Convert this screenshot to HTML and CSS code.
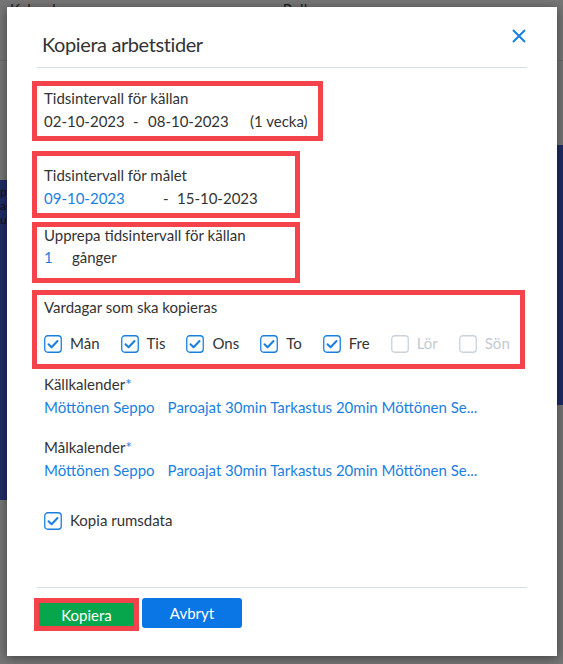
FILE: index.html
```html
<!DOCTYPE html>
<html lang="sv">
<head>
  <meta charset="UTF-8">
  <title>Kopiera arbetstider</title>
  <link rel="stylesheet" href="styles.css">
</head>
<body>

  <!-- Page behind the dialog (dimmed) -->
  <div class="page">
    <div class="page-head">
      <span class="tab">Kalendrar</span>
      <span class="tab tab-roles">Roller</span>
    </div>
    <div class="page-body">
      <div class="strip strip-left"><p>pe</p><p>as</p><p>ur</p></div>
      <div class="strip strip-right"></div>
    </div>
  </div>

  <!-- Copy working hours dialog -->
  <div class="modal">
    <div class="modal-header">
      <h2>Kopiera arbetstider</h2>
      <button class="close" type="button">
        <svg width="14" height="14" viewBox="0 0 14 14"><path d="M1 1L13 13M13 1L1 13"/></svg>
      </button>
    </div>

    <div class="modal-body">
      <div class="group g-source">
        <div class="label">Tidsintervall för källan</div>
        <div class="row">
          <span class="cell w-89">02-10-2023</span><span class="cell w-15">-</span><span class="cell w-102">08-10-2023</span><span>(1 vecka)</span>
        </div>
      </div>

      <div class="group g-target">
        <div class="label">Tidsintervall för målet</div>
        <div class="row">
          <span class="cell w-119 link">09-10-2023</span><span class="cell w-14">-</span><span>15-10-2023</span>
        </div>
      </div>

      <div class="group g-repeat">
        <div class="label">Upprepa tidsintervall för källan</div>
        <div class="row">
          <span class="cell w-28 link">1</span><span>gånger</span>
        </div>
      </div>

      <div class="group g-days">
        <div class="label">Vardagar som ska kopieras</div>
        <div class="days">
          <label class="check"><svg class="box on" viewBox="0 0 18 18"><rect x="0.75" y="0.75" width="16.5" height="16.5" rx="3"/><path d="M4.5 9.3L7.6 12.3L13.5 6"/></svg>Mån</label>
          <label class="check"><svg class="box on" viewBox="0 0 18 18"><rect x="0.75" y="0.75" width="16.5" height="16.5" rx="3"/><path d="M4.5 9.3L7.6 12.3L13.5 6"/></svg>Tis</label>
          <label class="check"><svg class="box on" viewBox="0 0 18 18"><rect x="0.75" y="0.75" width="16.5" height="16.5" rx="3"/><path d="M4.5 9.3L7.6 12.3L13.5 6"/></svg>Ons</label>
          <label class="check"><svg class="box on" viewBox="0 0 18 18"><rect x="0.75" y="0.75" width="16.5" height="16.5" rx="3"/><path d="M4.5 9.3L7.6 12.3L13.5 6"/></svg>To</label>
          <label class="check"><svg class="box on" viewBox="0 0 18 18"><rect x="0.75" y="0.75" width="16.5" height="16.5" rx="3"/><path d="M4.5 9.3L7.6 12.3L13.5 6"/></svg>Fre</label>
          <label class="check off"><svg class="box" viewBox="0 0 18 18"><rect x="0.75" y="0.75" width="16.5" height="16.5" rx="3"/></svg>Lör</label>
          <label class="check off"><svg class="box" viewBox="0 0 18 18"><rect x="0.75" y="0.75" width="16.5" height="16.5" rx="3"/></svg>Sön</label>
        </div>
      </div>

      <div class="field f-source">
        <div class="label">Källkalender<span class="req">*</span></div>
        <div class="row link"><span class="person">Möttönen Seppo</span><span>Paroajat 30min Tarkastus 20min Möttönen Se...</span></div>
      </div>

      <div class="field f-target">
        <div class="label">Målkalender<span class="req">*</span></div>
        <div class="row link"><span class="person">Möttönen Seppo</span><span>Paroajat 30min Tarkastus 20min Möttönen Se...</span></div>
      </div>

      <label class="check rooms"><svg class="box on" viewBox="0 0 18 18"><rect x="0.75" y="0.75" width="16.5" height="16.5" rx="3"/><path d="M4.5 9.3L7.6 12.3L13.5 6"/></svg>Kopia rumsdata</label>
    </div>

    <div class="modal-footer">
      <button type="button" class="btn btn-copy">Kopiera</button>
      <button type="button" class="btn btn-cancel">Avbryt</button>
    </div>
  </div>

</body>
</html>
```

FILE: styles.css
```css
body {
  margin: 0;
  height: 664px;
  overflow: hidden;
  position: relative;
  font-family: Lato, "Noto Sans", sans-serif;
  font-size: 15px;
  background-color: #767676;
}

/* dimmed page behind the dialog */
.page-head {
  height: 60px;
  border-bottom: 1px solid #6a6a6a;
  padding-left: 10px;
}

.tab {
  display: inline-block;
  margin-top: -12px;
  line-height: 20px;
  color: #1c1c1c;
}

.tab-roles {
  margin-left: 205px;
}

.page-body {
  display: flex;
  justify-content: space-between;
}

.strip {
  background-color: #1f2c66;
}

.strip-left {
  width: 7px;
  height: 320px;
  margin-top: 119px;
  overflow: hidden;
}

.strip-left p {
  margin: 0;
  font-size: 12px;
  line-height: 14px;
  color: #111;
}

.strip-left p:first-child {
  margin-top: 5px;
}

.strip-right {
  width: 20px;
  height: 260px;
  margin-top: 84px;
}

/* dialog */
.modal {
  position: absolute;
  left: 7px;
  top: 7px;
  width: 550px;
  height: 649px;
  box-sizing: border-box;
  padding: 0 30px;
  display: flex;
  flex-direction: column;
  background-color: #fff;
  box-shadow: 0 2px 10px rgba(0, 0, 0, 0.45);
  color: #333;
}

.modal-header {
  display: flex;
  justify-content: space-between;
  align-items: flex-start;
  padding: 22px 1px 8px 5px;
  border-bottom: 1px solid #d5dde6;
}

.modal-header h2 {
  margin: 0;
  font-size: 20px;
  font-weight: 400;
  letter-spacing: -0.4px;
  line-height: 30px;
  color: #333;
}

.close {
  padding: 0;
  border: none;
  background: none;
  width: 14px;
  height: 14px;
  cursor: pointer;
}

.close svg {
  display: block;
  fill: none;
  stroke: #1a7fe0;
  stroke-width: 2;
}

.modal-body {
  flex: 1;
}

.label,
.row {
  line-height: 23px;
  white-space: nowrap;
}

.link,
.req {
  color: #1a7fe0;
}

.cell {
  display: inline-block;
}

.w-14 { width: 14px; }
.w-15 { width: 15px; }
.w-28 { width: 28px; }
.w-89 { width: 89px; }
.w-102 { width: 102px; }
.w-119 { width: 119px; }

/* highlighted groups */
.group {
  box-sizing: border-box;
  padding-left: 7px;
  outline: 5px solid #f4434a;
}

.g-source {
  width: 281px;
  height: 50px;
  margin-top: 18px;
  padding-top: 1px;
}

.g-target {
  width: 258px;
  height: 57px;
  margin-top: 20px;
  padding-top: 8px;
}

.g-repeat {
  width: 258px;
  height: 51px;
  margin-top: 14px;
}

.g-repeat .label {
  line-height: 16px;
}

.g-repeat .row {
  margin-top: 3px;
}

.g-days {
  width: 483px;
  height: 69px;
  margin-top: 17px;
  padding-top: 1px;
}

.days {
  display: flex;
  gap: 21px;
  margin-top: 13px;
}

.check {
  display: flex;
  align-items: center;
  gap: 8px;
  line-height: 23px;
  color: #333;
}

.box {
  width: 18px;
  height: 18px;
  flex: none;
  fill: none;
  stroke: #c9d2dc;
  stroke-width: 1.3;
}

.box.on {
  stroke: #1a7fe0;
}

.box.on path {
  stroke-width: 2;
  stroke-linecap: round;
  stroke-linejoin: round;
}

.check.off {
  color: #c3cad4;
}

.field {
  padding-left: 7px;
}

.f-source {
  margin-top: 9px;
}

.f-target {
  margin-top: 17px;
}

.person {
  margin-right: 13px;
}

.rooms {
  margin-top: 27px;
  padding-left: 7px;
}

.modal-footer {
  display: flex;
  align-items: flex-start;
  height: 69px;
  box-sizing: border-box;
  padding-top: 10px;
  border-top: 1px solid #d5dde6;
}

.btn {
  font-family: inherit;
  font-size: 15px;
  color: #fff;
  border: none;
  cursor: pointer;
  padding: 0;
}

.btn-copy {
  width: 105px;
  height: 33px;
  margin-left: -3px;
  border: 5px solid #f4434a;
  background-color: #07a64c;
}

.btn-cancel {
  width: 100px;
  height: 30px;
  margin-left: 3px;
  border-radius: 3px;
  background-color: #0a76e6;
}
```
